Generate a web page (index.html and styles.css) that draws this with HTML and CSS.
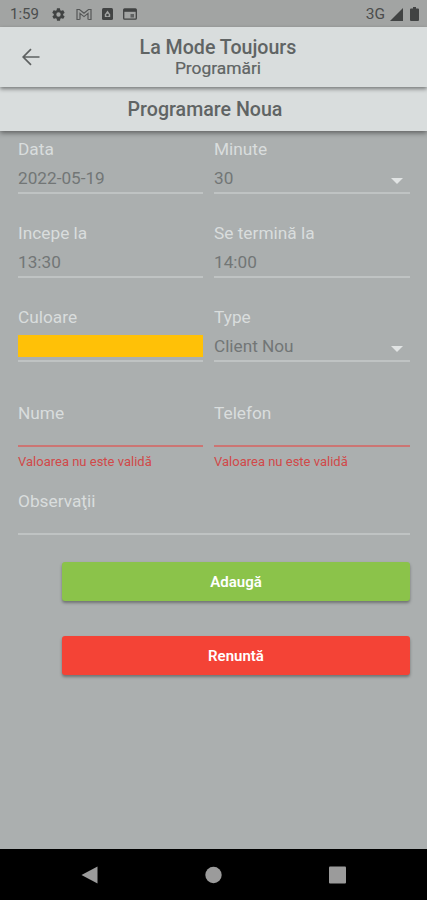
FILE: index.html
```html
<!DOCTYPE html>
<html lang="ro">
<head>
<meta charset="utf-8">
<title>La Mode Toujours</title>
<link rel="stylesheet" href="styles.css">
</head>
<body>
<div class="screen">
  <div class="status">
    <span class="clock">1:59</span>
    <div class="status-icons">
      <svg width="15" height="15" viewBox="0 0 24 24"><path fill="#414343" fill-rule="evenodd" d="M19.4 13c.1-.7.1-1.300 0-2l2.100-1.600c.2-.2.3-.4.100-.700l-2-3.400c-.1-.2-.4-.3-.6-.2l-2.500 1a7 7 0 0 0-1.700-1L14.400 2.400a.5.500 0 0 0-.5-.4h-4a.5.500 0 0 0-.5.400L9 5.100a7 7 0 0 0-1.700 1l-2.500-1c-.2-.1-.5 0-.6.200l-2 3.400c-.1.300-.1.500.1.700L4.500 11v2l-2.100 1.600c-.2.200-.3.400-.1.700l2 3.400c.1.200.4.300.6.200l2.500-1a7 7 0 0 0 1.700 1l.4 2.700c0 .2.200.4.500.4h4c.2 0 .5-.2.500-.4l.4-2.700a7 7 0 0 0 1.700-1l2.500 1c.2.100.5 0 .6-.2l2-3.400c.1-.2.100-.5-.1-.7zM12 15.500a3.500 3.500 0 1 1 0-7 3.500 3.500 0 0 1 0 7z"/></svg>
      <svg width="16" height="13" viewBox="0 0 16 13"><path fill="none" stroke="#555757" stroke-width="1.200" d="M3.700 11.500H1v-10h2.500L8 5.300l4.500-3.800H15v10h-2.700M4 11.500V5.400l4 3.200 4-3.200v6.100"/></svg>
      <svg width="11" height="12" viewBox="0 0 11 12"><rect width="11" height="12" rx="1.500" fill="#414343"/><path d="M2.800 9V6.500L5.500 2.500l2.700 4V9z" fill="#a2a4a3"/><circle cx="5.500" cy="7" r="1.300" fill="#414343"/></svg>
      <svg width="14" height="12" viewBox="0 0 14 12"><path fill="none" stroke="#414343" stroke-width="1.300" d="M1.600.8h10.800q.9 0 .9.900v8.600q0 .9-.9.900H1.600q-.9 0-.9-.9V1.700q0-.9.900-.9z"/><path fill="#414343" d="M1 1h12v2.800H1z"/><path fill="#5f6161" d="M7.500 6H11v3.500H7.500z"/></svg>
    </div>
    <span class="network">3G</span>
    <svg class="signal" width="13" height="13" viewBox="0 0 13 13"><path d="M13 0v13H0z" fill="#414343"/></svg>
    <svg width="9" height="14" viewBox="0 0 9 14"><path d="M3 0h3v1.500h2q1 0 1 1V13q0 1-1 1H1q-1 0-1-1V2.500q0-1 1-1h2z" fill="#414343"/></svg>
  </div>
  <header class="appbar">
    <svg class="back" width="18" height="18" viewBox="0 0 18 18"><path d="M17.500 9H1.500M9 1.200 1.200 9 9 16.800" fill="none" stroke="#5e6161" stroke-width="1.700"/></svg>
    <div class="titles">
      <h1>La Mode Toujours</h1>
      <p>Programări</p>
    </div>
  </header>
  <h2 class="subbar">Programare Noua</h2>
  <main class="form">
    <div class="field"><label>Data</label><div class="value">2022-05-19</div></div>
    <div class="field"><label>Minute</label><div class="value select">30</div></div>
    <div class="field"><label>Incepe la</label><div class="value">13:30</div></div>
    <div class="field"><label>Se termină la</label><div class="value">14:00</div></div>
    <div class="field"><label>Culoare</label><div class="value color"><span class="swatch"></span></div></div>
    <div class="field"><label>Type</label><div class="value select">Client Nou</div></div>
    <div class="field invalid"><label>Nume</label><div class="value empty"></div><p class="error">Valoarea nu este validă</p></div>
    <div class="field invalid"><label>Telefon</label><div class="value empty"></div><p class="error">Valoarea nu este validă</p></div>
    <div class="field wide"><label>Observaţii</label><div class="value empty"></div></div>
  </main>
  <div class="actions">
    <button class="add">Adaugă</button>
    <button class="cancel">Renuntă</button>
  </div>
  <nav class="navbar">
    <svg width="17" height="18" viewBox="0 0 17 18"><path d="M16.500.5v17L.5 9z" fill="#9b9b9b"/></svg>
    <svg width="17" height="18" viewBox="0 0 17 18"><circle cx="8.500" cy="9" r="8.200" fill="#9b9b9b"/></svg>
    <svg width="17" height="18" viewBox="0 0 17 18"><rect y=".5" width="17" height="17" rx="1" fill="#9b9b9b"/></svg>
  </nav>
</div>
</body>
</html>
```
FILE: styles.css
```css
* { box-sizing: border-box; }
body, h1, h2, p { margin: 0; }
body { font-family: Roboto, sans-serif; }
.screen {
  width: 427px;
  height: 900px;
  display: flex;
  flex-direction: column;
  background: #abafaf;
  overflow: hidden;
}
.status {
  height: 27px;
  flex: none;
  display: flex;
  align-items: center;
  padding: 1px 8px 0 10px;
  background: #a2a4a3;
  color: #4b4d4d;
  font-size: 15px;
}
.clock { width: 41px; }
.status-icons { display: flex; align-items: center; gap: 10px; }
.network { margin-left: auto; font-size: 15.500px; }
.signal { margin: 0 7px 0 5px; }
.appbar {
  height: 60px;
  flex: none;
  display: flex;
  align-items: center;
  position: relative;
  z-index: 2;
  padding: 0 50px 0 22px;
  background: #d9dddd;
  box-shadow: 0 2px 4px rgba(0, 0, 0, .45);
  color: #606464;
}
.back { flex: none; }
.titles { flex: 1; text-align: center; padding-left: 19px; }
h1 { font-size: 19.600px; line-height: 23px; font-weight: 500; }
.titles p { height: 20px; font-size: 17.400px; line-height: 18px; -webkit-text-stroke: .2px #606464; }
.subbar {
  height: 44px;
  flex: none;
  padding-right: 17px;
  background: #d9dddd;
  box-shadow: 0 2px 5px rgba(0, 0, 0, .45);
  color: #606464;
  text-align: center;
  font-size: 19.600px;
  line-height: 45px;
  font-weight: 500;
}
.form {
  display: grid;
  grid-template-columns: 185px 196px;
  grid-template-rows: 56px 56px 56px 67px 49px;
  column-gap: 11px;
  row-gap: 28px;
  padding: 8px 17px 0 18px;
}
.field label {
  display: block;
  height: 22px;
  line-height: 20px;
  color: #d9dddd;
  font-size: 17.300px;
}
.value {
  display: flex;
  height: 33px;
  padding-top: 7px;
  border-bottom: 2px solid #bfc3c3;
  color: #727676;
  font-size: 17.200px;
  line-height: 20px;
}
.select { justify-content: space-between; padding-right: 7px; }
.select::after {
  content: "";
  align-self: flex-start;
  margin-top: 10px;
  border: 6px solid transparent;
  border-top-color: #e1e4e4;
  border-bottom: 0;
}
.color { padding-top: 6px; }
.empty { height: 22px; }
.swatch { width: 100%; height: 22px; background: #ffc107; }
.invalid { margin-top: 12px; }
.invalid .value { border-color: #cc7573; }
.error { margin-top: 6px; color: #d14949; font-size: 13px; line-height: 18px; }
.wide { grid-column: 1 / -1; margin-top: 5px; }
.actions {
  display: flex;
  flex-direction: column;
  gap: 35px;
  margin-top: 27px;
  padding: 0 17px 0 62px;
}
button {
  height: 39px;
  border: 0;
  border-radius: 3px;
  box-shadow: 0 2px 3px rgba(0, 0, 0, .35);
  color: #fff;
  font: 600 15px Roboto, sans-serif;
}
.add { background: #8bc34a; }
.cancel { background: #f44336; }
.navbar {
  display: flex;
  flex: none;
  align-items: center;
  gap: 107px;
  height: 51px;
  margin-top: auto;
  padding-left: 81px;
  background: #000;
}
```
